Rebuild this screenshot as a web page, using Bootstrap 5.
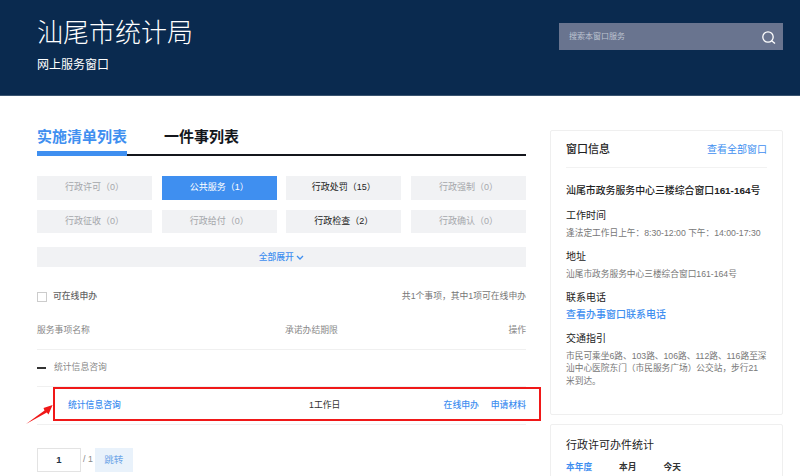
<!DOCTYPE html>
<html lang="zh"><head><meta charset="utf-8"><title>汕尾市统计局</title>
<link href="https://cdn.jsdelivr.net/npm/bootstrap@5.3.0/dist/css/bootstrap.min.css" rel="stylesheet">
<style>
html,body{height:476px;overflow:hidden}
body{font-family:"Liberation Sans","Noto Sans CJK SC",sans-serif;font-size:9px;color:#333;background:#fff}
a{text-decoration:none;color:#3f8ff0}
.hero{height:96px;background:#0a2a4f;border-bottom:1px solid #3a5470;padding:0 17px 0 37px}
.hero h1{font-size:26px;font-weight:300;color:#fff;margin:0;line-height:34px;padding-top:16px}
.hero p{font-size:12px;color:#fff;margin:7px 0 0;line-height:16px}
.search{width:224px;height:27px;margin-top:23px;background:#69748f;padding:0 6px 0 10px;color:#bcc3cf;font-size:8px}
.page{padding:32px 17px 0 37px;gap:24px}
.main{width:489px}
.side{width:233px;padding-top:2px}
.tabs{border-bottom:2px solid #14161c;height:28px;gap:37px}
.tabs a{font-size:15px;font-weight:700;line-height:18px;height:28px;color:#14161c}
.tabs a.active{color:#3f8ff0;border-bottom:5px solid #3f8ff0;margin-bottom:-2px;height:28px}
.cats{display:grid;grid-template-columns:repeat(4,1fr);column-gap:9.6px;row-gap:10px;margin-top:20px}
.cat{height:23.5px;background:#f1f2f4;color:#a5a7ab;font-size:9px;line-height:23.5px;text-align:center}
.cat.on{color:#222}
.cat.sel{background:#3f8ff0;color:#fff}
.more{height:20px;line-height:20px;margin-top:14px;background:#f1f2f4;color:#3f8ff0;font-size:8.8px;font-weight:500;text-align:center}
.filter{margin-top:20px;height:20px;color:#777;font-size:8.8px}
.box{width:10px;height:10px;border:1px solid #ccc;margin-right:6px}
.filter b{font-weight:500;color:#666}
.thead{height:39px;padding-top:13px;border-bottom:1px solid #f0f0f0;color:#888;font-size:8.8px;margin-top:4px;display:grid;grid-template-columns:248px auto 1fr;white-space:nowrap}
.thead span:last-child{text-align:right}
.group{height:37px;border-bottom:1px solid #f0f0f0;color:#888;font-size:8.8px}
.dash{width:9px;height:1.5px;background:#333;margin-right:8px}
.row-item{position:relative;height:38px;border-bottom:1px solid #f0f0f0;padding:1px 0 0 31px;font-size:8.8px;color:#333;display:grid;grid-template-columns:241px 1fr auto;align-items:center}
.row-item a{font-weight:500}
.redbox{position:absolute;left:16px;top:0;width:488px;height:34px;border:2px solid #f01818;pointer-events:none}
.arrow{position:absolute;left:-13px;top:16px}
.pager{margin-top:23px;color:#888;font-size:8.8px}
.num{width:44px;height:24px;border:1px solid #e3e3e3;color:#234;font-size:9.5px;font-weight:700;line-height:22px;text-align:center;margin-right:2px}
.go{width:38px;height:24px;line-height:24px;background:#e9f2fb;color:#6ea6e8;font-size:9.5px;text-align:center;margin-left:2px}
.panel{border:1px solid #efefef;border-radius:2px;padding:0 15px}
.info{height:285px}
.ph{height:37px;border-bottom:1px solid #f2f2f2}
.ph span{font-size:11px;color:#222;font-weight:500}
.ph a{font-size:10px}
.info h6{font-size:10px;font-weight:400;color:#222;margin:0;line-height:14px}
.info h6.addr{margin-top:16px;font-weight:500;font-size:9.9px}
.info h6.t{margin-top:11px}
.info p{font-size:8.7px;color:#777;margin:3.5px -2px 0 0;line-height:12.6px}
.info p a{font-size:10px;font-weight:500}
.stat{margin-top:9px;padding-top:9px;height:60px}
.stat h5{font-size:11px;font-weight:400;color:#222;margin:0;line-height:22px}
.tabs2{gap:27px;font-size:8.7px;font-weight:700;color:#333;margin-top:5px}
</style></head><body>
<header class="hero d-flex justify-content-between align-items-start">
<div><h1>汕尾市统计局</h1><p>网上服务窗口</p></div>
<div class="search d-flex justify-content-between align-items-center"><span>搜索本窗口服务</span>
<svg width="16" height="16" viewBox="0 0 16 16" fill="none" stroke="#fff" stroke-width="1.3"><circle cx="7" cy="8" r="5.2"/><path d="M10.6 11.8 14 14.6"/></svg></div>
</header>
<div class="page d-flex align-items-start">
<section class="main">
<nav class="tabs d-flex"><a class="active" href="#">实施清单列表</a><a href="#">一件事列表</a></nav>
<div class="cats">
<div class="cat">行政许可（0）</div><div class="cat sel">公共服务（1）</div><div class="cat on">行政处罚（15）</div><div class="cat">行政强制（0）</div>
<div class="cat">行政征收（0）</div><div class="cat">行政给付（0）</div><div class="cat on">行政检查（2）</div><div class="cat">行政确认（0）</div>
</div>
<div class="more">全部展开 <svg width="8" height="6" viewBox="0 0 8 6" fill="none" stroke="#3f8ff0" stroke-width="1.3"><path d="M1 1l3 3 3-3"/></svg></div>
<div class="filter d-flex align-items-center justify-content-between"><div class="d-flex align-items-center"><span class="box"></span><b>可在线申办</b></div><span>共1个事项，其中1项可在线申办</span></div>
<div class="thead"><span>服务事项名称</span><span>承诺办结期限</span><span>操作</span></div>
<div class="group d-flex align-items-center"><span class="dash"></span><span>统计信息咨询</span></div>
<div class="row-item">
<a href="#">统计信息咨询</a><span>1工作日</span><span class="d-flex gap-2"><a href="#">在线申办</a><a href="#" class="ms-1">申请材料</a></span>
<div class="redbox"></div>
<svg class="arrow" width="30" height="24" viewBox="0 0 30 24"><path d="M2 21 20.5 7.5 19.5 5 28.6 2 24.5 11.5 22.8 9.5Z" fill="#f01818"/></svg>
</div>
<div class="pager d-flex align-items-center"><span class="num">1</span><span>/ 1</span><span class="go">跳转</span></div>
</section>
<aside class="side">
<div class="panel info">
<div class="ph d-flex justify-content-between align-items-center"><span>窗口信息</span><a href="#">查看全部窗口</a></div>
<h6 class="addr">汕尾市政务服务中心三楼综合窗口<b>161-164</b>号</h6>
<h6 class="t">工作时间</h6><p>逢法定工作日上午：8:30-12:00 下午：14:00-17:30</p>
<h6 class="t">地址</h6><p>汕尾市政务服务中心三楼综合窗口161-164号</p>
<h6 class="t">联系电话</h6><p><a href="#">查看办事窗口联系电话</a></p>
<h6 class="t">交通指引</h6><p>市民可乘坐6路、103路、106路、112路、116路至深汕中心医院东门（市民服务广场）公交站，步行21<br>米到达。</p>
</div>
<div class="panel stat"><h5>行政许可办件统计</h5><div class="tabs2 d-flex"><a href="#">本年度</a><span>本月</span><span>今天</span></div></div>
</aside>
</div>
</body></html>
